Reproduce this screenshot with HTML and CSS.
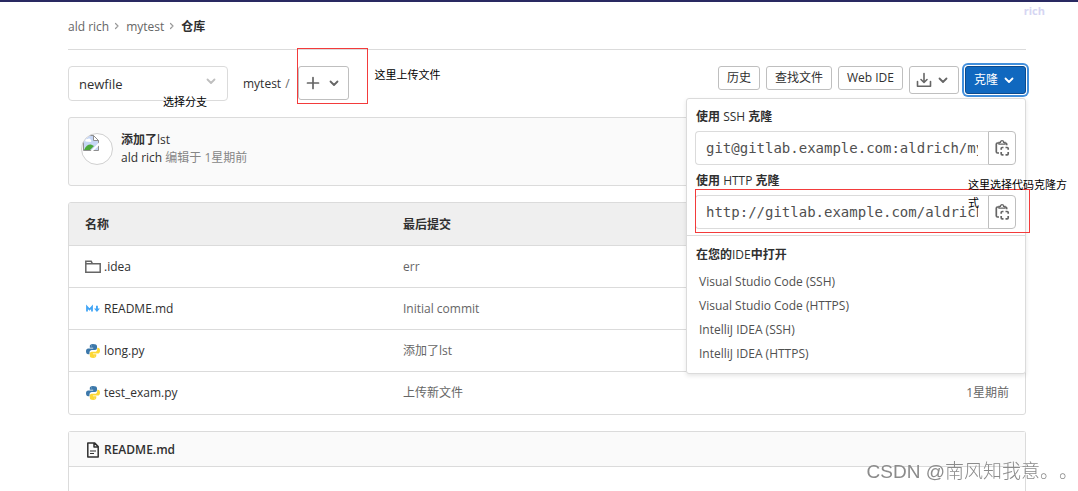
FILE: index.html
```html
<!DOCTYPE html>
<html lang="zh-CN">
<head>
<meta charset="utf-8">
<title>仓库 · mytest</title>
<link rel="stylesheet" href="styles.css">
</head>
<body>
<svg class="sprite" aria-hidden="true">
  <symbol id="chevron" viewBox="0 0 16 16"><path d="M4.500 6.500L8 10l3.500-3.500" fill="none" stroke="currentColor" stroke-width="1.800" stroke-linecap="round" stroke-linejoin="round"/></symbol>
  <symbol id="chevron-right" viewBox="0 0 16 16"><path d="M5 3l5 5-5 5" fill="none" stroke="currentColor" stroke-width="2.400" stroke-linecap="round" stroke-linejoin="round"/></symbol>
  <symbol id="copy" viewBox="0 0 16 16"><path d="M4.800 3H3.500A1.200 1.200 0 0 0 2.300 4.200v7.600A1.200 1.200 0 0 0 3.500 13H5M11.200 3A1.500 1.500 0 0 1 12.700 4.500v.7" fill="none" stroke="currentColor" stroke-width="1.700"/><path d="M5 4.200V2.300h1.400a1.600 1.600 0 0 1 3.200 0H11v1.900z" fill="none" stroke="currentColor" stroke-width="1.300"/><path d="M7.200 9.700V8.500a1 1 0 0 1 1-1h1.300M11.500 7.500h1.700a1 1 0 0 1 1 1v1.200M14.200 12v1.800a1 1 0 0 1-1 1h-1.700M9.500 14.800H8.200a1 1 0 0 1-1-1V12" fill="none" stroke="currentColor" stroke-width="1.700"/></symbol>
  <symbol id="python" viewBox="0 0 16 16"><path fill="#3c78aa" d="M7.900 1C5.500 1 4.800 2 4.800 3.200v1.600h3.400v.6H3.300C1.800 5.400 1 6.600 1 8.300s.8 3 2.200 3h1.300V9.500c0-1.300 1.100-2.400 2.400-2.400h3.200c1 0 1.900-.9 1.900-2V3.200C12 1.700 10.600 1 7.900 1z"/><circle cx="6.300" cy="2.900" r=".4" fill="#fff"/><path fill="#fdd835" d="M8.200 15c2.300 0 3.100-1 3.100-2.200v-1.600H7.900v-.6h4.800c1.500 0 2.300-1.200 2.300-2.900s-.8-3-2.200-3h-.6v1.700c0 1.300-1.100 2.400-2.400 2.400H6.700c-1 0-1.900.9-1.900 2v2C4.800 14.300 6 15 8.200 15z"/><circle cx="9.800" cy="13.100" r=".4" fill="#fff"/></symbol>
</svg>
<div class="navbar"><span class="ghost-name">rich</span></div>
<main class="page">
  <nav class="breadcrumbs" aria-label="导航">
    <a href="#">ald rich</a><svg class="sep"><use href="#chevron-right"/></svg>
    <a href="#">mytest</a><svg class="sep"><use href="#chevron-right"/></svg>
    <a class="current" href="#">仓库</a>
  </nav>

  <div class="toolbar">
    <div class="branch">
      <select class="branch-select" aria-label="选择分支"><option>newfile</option></select>
      <svg class="icon branch-arrow"><use href="#chevron"/></svg>
      <span class="note note-branch">选择分支</span>
    </div>
    <div class="path"><a href="#">mytest</a><span class="slash">/</span></div>
    <div class="add">
      <button class="btn btn-add" type="button" aria-label="添加">
        <svg class="icon" viewBox="0 0 16 16"><path d="M8 2.500v11M2.500 8h11" stroke="currentColor" stroke-width="1.700" stroke-linecap="round"/></svg>
        <svg class="icon"><use href="#chevron"/></svg>
      </button>
      <span class="mark mark-add"></span>
      <span class="note note-add">这里上传文件</span>
    </div>
    <div class="actions">
      <button class="btn" type="button">历史</button>
      <button class="btn" type="button">查找文件</button>
      <button class="btn" type="button">Web IDE</button>
      <button class="btn btn-tall btn-download" type="button" aria-label="下载">
        <svg class="icon" viewBox="0 0 16 16"><path d="M8 1.500v8.500M5 7.500l3 3 3-3M1.500 9.500v4.700h13V9.500" fill="none" stroke="currentColor" stroke-width="1.600" stroke-linecap="round" stroke-linejoin="round"/></svg>
        <svg class="icon"><use href="#chevron"/></svg>
      </button>
      <div class="clone">
        <button class="btn btn-tall btn-clone" type="button">克隆<svg class="icon"><use href="#chevron"/></svg></button>
        <div class="menu">
          <div class="menu-section">
            <label class="menu-label" for="ssh">使用 <span class="latin">SSH</span> 克隆</label>
            <div class="copy-group">
              <input id="ssh" type="text" readonly value="git@gitlab.example.com:aldrich/mytest.git">
              <button type="button" aria-label="复制 SSH 地址"><svg class="icon"><use href="#copy"/></svg></button>
            </div>
            <label class="menu-label" for="http">使用 <span class="latin">HTTP</span> 克隆</label>
            <div class="copy-group">
              <input id="http" type="text" readonly value="http://gitlab.example.com/aldrich/mytest.git">
              <button type="button" aria-label="复制 HTTP 地址"><svg class="icon"><use href="#copy"/></svg></button>
              <span class="mark mark-http"></span>
              <span class="note note-http">这里选择代码克隆方式</span>
            </div>
          </div>
          <div class="menu-section menu-ide">
            <h3>在您的<span class="latin">IDE</span>中打开</h3>
            <a href="#">Visual Studio Code (SSH)</a>
            <a href="#">Visual Studio Code (HTTPS)</a>
            <a href="#">IntelliJ IDEA (SSH)</a>
            <a href="#">IntelliJ IDEA (HTTPS)</a>
          </div>
        </div>
      </div>
    </div>
  </div>

  <section class="commit">
    <span class="avatar">
      <svg class="icon" viewBox="0 0 16 16"><path d="M.5.5h10l5 5v10H.5z" fill="#c6d6f4" stroke="#8f8f8f"/><path d="M10.500.5v5h5z" fill="#fff" stroke="#8f8f8f"/><path d="M2.500 6.500a1.700 1.700 0 0 1 2-2.500 2 2 0 0 1 3.300 1 1.200 1.200 0 0 1 0 2z" fill="#fff"/><path d="M1 15c2-4.500 5-6 7.500-5.200L11 11l-4 4z" fill="#4ba83b"/><path d="M16 7.500L7.500 16H10l6-5.500z" fill="#fff"/></svg>
    </span>
    <div>
      <a class="commit-title" href="#">添加了<span class="latin">lst</span></a>
      <div class="commit-meta"><a href="#">ald rich</a> 编辑于 1星期前</div>
    </div>
  </section>

  <div class="files">
    <table>
      <thead><tr><th class="col-name">名称</th><th class="col-commit">最后提交</th><th class="col-time">最后更新</th></tr></thead>
      <tbody>
        <tr><td><a class="file" href="#"><svg class="icon" viewBox="0 0 16 16"><path d="M.8 13.300V2.300h5.400l1.300 2.500h7.700v8.500zM.8 4.800h7" fill="none" stroke="#666" stroke-width="1.500"/></svg>.idea</a></td><td>err</td><td class="time">1星期前</td></tr>
        <tr><td><a class="file" href="#"><svg class="icon" viewBox="0 0 16 16"><path d="M2 10.500V5.800L4.500 8.500 7 5.800v4.700" fill="none" stroke="#42a5f5" stroke-width="1.800"/><path d="M11 4.800h1.900v2.700h2l-2.950 3.500L9 7.500h2z" fill="#42a5f5"/></svg>README.md</a></td><td>Initial commit</td><td class="time">1星期前</td></tr>
        <tr><td><a class="file" href="#"><svg class="icon"><use href="#python"/></svg>long.py</a></td><td>添加了lst</td><td class="time">1星期前</td></tr>
        <tr><td><a class="file" href="#"><svg class="icon"><use href="#python"/></svg>test_exam.py</a></td><td>上传新文件</td><td class="time">1星期前</td></tr>
      </tbody>
    </table>
  </div>

  <section class="readme">
    <header><svg class="icon" viewBox="0 0 16 16"><path d="M2.800.9h6.700l3.700 3.700v10.500H2.800zM9 1v4h4" fill="none" stroke="#303030" stroke-width="1.500" stroke-linejoin="round"/><path d="M5 9h6M5 11.500h4" stroke="#303030" stroke-width="1.100"/></svg><a href="#">README.md</a></header>
  </section>
</main>
<div class="watermark">CSDN @南风知我意。。</div>
</body>
</html>
```
FILE: styles.css
```css
* { box-sizing: border-box; }

body {
  margin: 0;
  min-height: 100vh;
  display: flex;
  flex-direction: column;
  background: #fff;
  color: #303030;
  font: 12px/18px "Open Sans", "Noto Sans CJK SC", sans-serif;
}

a { color: inherit; text-decoration: none; }
button, input, select { font: inherit; color: inherit; margin: 0; }
.sprite { position: absolute; width: 0; height: 0; }
.icon { width: 16px; height: 16px; flex: none; }
.latin { font-weight: 400; }

.navbar { position: relative; height: 2px; background: #292961; }
.ghost-name { position: absolute; top: 2px; right: 33px; color: #d6d6f3; font-size: 11px; font-weight: 700; }

.page { flex: 1; display: flex; flex-direction: column; margin: 0 52px 0 68px; }

.breadcrumbs {
  display: flex;
  align-items: center;
  height: 48px;
  padding-top: 2px;
  border-bottom: 1px solid #dbdbdb;
  color: #666;
}
.sep { width: 8px; height: 8px; margin: 0 5px 2px 4px; color: #999; }
.breadcrumbs .current { color: #303030; font-weight: 600; }

.toolbar { display: flex; align-items: flex-start; height: 35px; margin-top: 16px; }
.branch { position: relative; width: 160px; }
.branch-select {
  display: block;
  width: 100%;
  height: 35px;
  padding: 0 10px;
  appearance: none;
  border: 1px solid #dbdbdb;
  border-radius: 4px;
  background: #fff;
  font-size: 13px;
}
.branch-arrow { position: absolute; top: 7px; right: 9px; color: #bfbfbf; }
.path { display: flex; gap: 4px; margin-left: 15px; line-height: 36px; }
.slash { color: #666; }
.add { position: relative; margin-left: 8px; }

.btn {
  display: flex;
  align-items: center;
  justify-content: center;
  gap: 4px;
  height: 24px;
  padding: 0 8px;
  border: 1px solid #bfbfbf;
  border-radius: 3px;
  background: #fff;
}
.btn .icon { color: #666; }
.btn-add { height: 34px; gap: 5px; padding: 0 6px; width: 51px; }
.btn-tall { height: 28px; }
.btn-download { width: 50px; padding: 0; gap: 3px; }
.btn-clone { padding: 0 8px; gap: 3px; border-color: #0d4a8c; background: #1068bf; color: #fff; box-shadow: 0 0 0 1px #fff, 0 0 0 3px #428fdc; }
.btn-clone .icon { color: #fff; }
.actions { display: flex; align-items: flex-start; gap: 6px; margin-left: auto; }
.clone { position: relative; }

.menu {
  position: absolute;
  z-index: 2;
  top: 32px;
  right: 0;
  width: 340px;
  border: 1px solid #dbdbdb;
  border-radius: 3px;
  background: #fff;
  box-shadow: 0 2px 4px rgba(0, 0, 0, 0.1);
}
.menu-section { padding: 2px 9px 6px 8px; }
.menu-label { display: block; padding: 2px 0 0 1px; line-height: 28px; font-weight: 600; }
.copy-group { position: relative; display: flex; height: 34px; }
.copy-group input {
  flex: 1;
  min-width: 0;
  padding: 0 10px;
  border: 1px solid #dbdbdb;
  border-right: 0;
  border-radius: 4px 0 0 4px;
  background: #fff;
  color: #505050;
  font: 14px "DejaVu Sans Mono", monospace;
}
.copy-group button {
  display: flex;
  align-items: center;
  justify-content: center;
  width: 28px;
  padding: 0;
  border: 1px solid #bfbfbf;
  border-radius: 0 4px 4px 0;
  background: #fff;
  color: #666;
}
.menu-ide { padding: 9px 9px 7px; border-top: 1px solid #dbdbdb; }
.menu h3 { margin: 0 0 5px; font-size: 12px; line-height: 20px; font-weight: 600; }
.menu-ide a { display: block; padding-left: 3px; line-height: 24px; color: #505050; }

.commit {
  display: flex;
  gap: 8px;
  margin-top: 16px;
  padding: 13px 12px;
  height: 69px;
  border: 1px solid #dbdbdb;
  border-radius: 3px;
  background: #fafafa;
}
.avatar { width: 32px; height: 32px; margin-top: 2px; border: 1px solid #d0d0d0; border-radius: 50%; background: #fff; overflow: hidden; }
.avatar .icon { display: block; margin: 1px; }
.commit-title { display: block; font-weight: 600; }
.commit-meta { color: #868686; }
.commit-meta a { color: #303030; }

.files { margin-top: 16px; padding-bottom: 1px; border: 1px solid #dbdbdb; border-radius: 3px; overflow: hidden; }
table { width: 100%; border-collapse: collapse; table-layout: fixed; }
th, td { height: 42px; padding: 2px 16px 0; text-align: left; color: #666; }
th { background: #efefef; color: #303030; font-weight: 600; }
td { border-top: 1px solid #dbdbdb; }
.col-name { width: 318px; }
.col-time { width: 160px; }
.col-time, .time { text-align: right; }
.file { display: flex; align-items: center; gap: 3px; color: #303030; }

.readme { flex: 1; margin-top: 16px; border: 1px solid #dbdbdb; border-bottom: 0; border-radius: 3px 3px 0 0; }
.readme header {
  display: flex;
  align-items: center;
  gap: 3px;
  height: 35px;
  padding: 2px 16px 0;
  border-bottom: 1px solid #dbdbdb;
  background: #fafafa;
  font-weight: 600;
}

.note { position: absolute; z-index: 3; color: #000; font-size: 11px; line-height: 18px; }
.note-branch { left: 95px; top: 27px; }
.note-add { left: 77px; top: 0; white-space: nowrap; }
.note-http { left: 273px; top: -19px; width: 104px; }
.mark { position: absolute; z-index: 3; border: 1px solid #f33b3b; pointer-events: none; }
.mark-add { left: -1px; top: -18px; width: 71px; height: 56px; }
.mark-http { left: 0; top: -6px; width: 335px; height: 44px; }

.watermark { position: fixed; right: 0; bottom: 6px; z-index: 4; color: #8b8b8b; font: 300 19px/26px "Liberation Sans", "Noto Sans CJK SC", sans-serif; text-spacing-trim: space-all; }
```
